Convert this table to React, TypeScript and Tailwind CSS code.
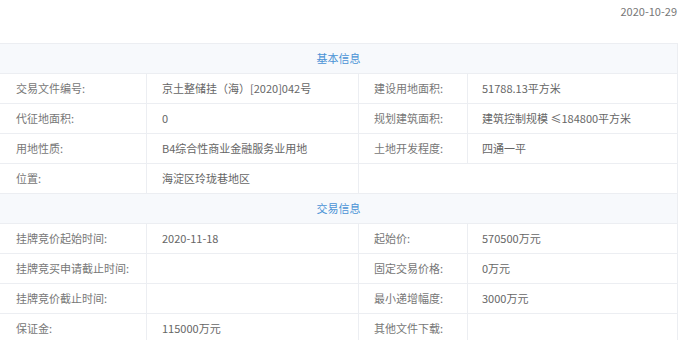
const font = { fontFamily: '"Noto Sans CJK SC", "Noto Sans", sans-serif' }

type Row = [string, string, string?, string?]

const basic: Row[] = [
  ['交易文件编号:', '京土整储挂（海）[2020]042号', '建设用地面积:', '51788.13平方米'],
  ['代征地面积:', '0', '规划建筑面积:', '建筑控制规模 ≤184800平方米'],
  ['用地性质:', 'B4综合性商业金融服务业用地', '土地开发程度:', '四通一平'],
  ['位置:', '海淀区玲珑巷地区'],
]

const trade: Row[] = [
  ['挂牌竞价起始时间:', '2020-11-18', '起始价:', '570500万元'],
  ['挂牌竞买申请截止时间:', '', '固定交易价格:', '0万元'],
  ['挂牌竞价截止时间:', '', '最小递增幅度:', '3000万元'],
  ['保证金:', '115000万元', '其他文件下载:', ''],
]

function SectionHead({ title }: { title: string }) {
  return (
    <tr className="h-[30px]">
      <td colSpan={4} className="border border-[#eceef2] bg-[#f7f9fc] text-center text-[11px] text-[#4a93d6]">
        {title}
      </td>
    </tr>
  )
}

function DataRow({ row }: { row: Row }) {
  const [l1, v1, l2, v2] = row
  const cell = 'border border-[#eceef2] text-[11px] align-middle'
  return (
    <tr className="h-[30px]">
      <td className={`${cell} pl-4 text-[#777]`}>{l1}</td>
      <td className={`${cell} pl-[15px] text-[#666]`}>{v1}</td>
      {l2 === undefined ? (
        <td colSpan={2} className={cell}></td>
      ) : (
        <>
          <td className={`${cell} pl-[15px] text-[#777]`}>{l2}</td>
          <td className={`${cell} pl-[14px] text-[#666]`}>{v2}</td>
        </>
      )}
    </tr>
  )
}

export default function App() {
  return (
    <div className="w-[680px] h-[340px] bg-white overflow-hidden" style={font}>
      <div className="h-[43px] flex justify-end pr-[3px] pt-[3px] text-[11px] text-[#777]">2020-10-29</div>
      <table className="w-[678px] border-collapse table-fixed ml-[-1px]">
        <colgroup>
          <col className="w-[147px]" />
          <col className="w-[212px]" />
          <col className="w-[109px]" />
          <col className="w-[210px]" />
        </colgroup>
        <tbody>
          <SectionHead title="基本信息" />
          {basic.map((r) => (
            <DataRow key={r[0]} row={r} />
          ))}
          <SectionHead title="交易信息" />
          {trade.map((r) => (
            <DataRow key={r[0]} row={r} />
          ))}
        </tbody>
      </table>
    </div>
  )
}
